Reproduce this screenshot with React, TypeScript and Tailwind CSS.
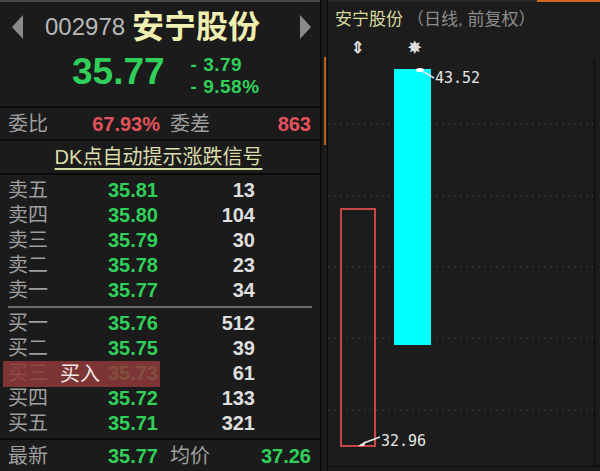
import React from "react"

type Level = { label: string; price: string; vol: string }

const sells: Level[] = [
    { label: "卖五", price: "35.81", vol: "13" },
    { label: "卖四", price: "35.80", vol: "104" },
    { label: "卖三", price: "35.79", vol: "30" },
    { label: "卖二", price: "35.78", vol: "23" },
    { label: "卖一", price: "35.77", vol: "34" },
]

const buys: Level[] = [
    { label: "买一", price: "35.76", vol: "512" },
    { label: "买二", price: "35.75", vol: "39" },
    { label: "买三", price: "35.73", vol: "61" },
    { label: "买四", price: "35.72", vol: "133" },
    { label: "买五", price: "35.71", vol: "321" },
]

// y positions of the dotted price grid inside the chart
const gridLines = [64, 136, 207, 278, 350]

function LevelRow({ level, active }: { level: Level; active?: boolean }) {
    return (
        <div className="relative grid h-[25px] grid-cols-[100px_58px_97px] items-center leading-none">
            <span className="pl-2 text-[20px] text-[#9e9e9e]">{level.label}</span>
            <span className="text-right text-[20px] font-bold text-[#30cf5a]">
                {level.price}
            </span>
            <span className="text-right text-[20px] font-bold text-[#dedede]">
                {level.vol}
            </span>
            {active && (
                // quick-buy overlay sitting on top of the row
                <div className="absolute top-[1px] left-[3px] flex h-[26px] w-[157px] items-center bg-[#8e3838]/85 pl-[57px] text-[20px] text-[#f4e8e8]">
                    买入
                </div>
            )}
        </div>
    )
}

function Arrow({ dir }: { dir: "left" | "right" }) {
    return (
        <svg width="11" height="24" viewBox="0 0 11 24">
            {dir === "left" ? (
                <polygon points="11,0 11,24 0,12" fill="#8a8a8a" />
            ) : (
                <polygon points="0,0 0,24 11,12" fill="#8a8a8a" />
            )}
        </svg>
    )
}

function QuotePanel() {
    return (
        <div className="flex w-[320px] flex-col bg-[#1b1b1b]">
            <div className="h-[2px] bg-[#474747]" />
            {/* code / name */}
            <div className="flex h-[50px] items-center leading-none">
                <div className="pl-[12px]">
                    <Arrow dir="left" />
                </div>
                <span className="ml-[22px] text-[24px] text-[#b9b9b9]">002978</span>
                <span className="ml-[7px] text-[32px] font-bold text-[#efefb0]">
                    安宁股份
                </span>
                <div className="mr-[9px] ml-auto">
                    <Arrow dir="right" />
                </div>
            </div>
            {/* last price and change */}
            <div className="flex h-[54px] items-start pt-[1px] leading-none">
                <span className="pl-[72px] text-[37px] font-bold text-[#30cf5a]">35.77</span>
                <div className="ml-[26px] flex flex-col gap-[3px] pt-[2px] text-[19px] font-bold text-[#30cf5a]">
                    <span className="tracking-[0.5px]">-&nbsp;3.79</span>
                    <span className="tracking-[0.5px]">-&nbsp;9.58%</span>
                </div>
            </div>
            <div className="h-[2px] bg-[#0b0b0b]" />
            <div className="flex h-[31px] items-center text-[20px] leading-none">
                <span className="w-[88px] pl-2 text-[#9e9e9e]">委比</span>
                <span className="w-[72px] text-right font-bold text-[#e2525c]">67.93%</span>
                <span className="pl-[10px] text-[#9e9e9e]">委差</span>
                <span className="flex-1 pr-[9px] text-right font-bold text-[#e2525c]">863</span>
            </div>
            <div className="h-[2px] bg-[#0b0b0b]" />
            <div className="flex h-[32px] items-center justify-center pr-[3px] leading-none">
                <span className="text-[20px] text-[#dcdcab] underline decoration-[1.5px] underline-offset-[4px]">
                    DK点自动提示涨跌信号
                </span>
            </div>
            <div className="h-[2px] bg-[#0b0b0b]" />
            <div className="pt-[2px]">
                {sells.map((l) => (
                    <LevelRow key={l.label} level={l} />
                ))}
            </div>
            <div className="mt-[4px] mr-[8px] ml-[8px] h-[2px] bg-[#6b6b6b]" />
            <div className="pt-[2px]">
                {buys.map((l) => (
                    <LevelRow key={l.label} level={l} active={l.label === "买三"} />
                ))}
            </div>
            <div className="mt-[3px] h-[2px] bg-[#0b0b0b]" />
            <div className="flex flex-1 items-center text-[20px] leading-none">
                <span className="w-[100px] pl-2 text-[#9e9e9e]">最新</span>
                <span className="w-[58px] text-right font-bold text-[#30cf5a]">35.77</span>
                <span className="pl-[12px] text-[#9e9e9e]">均价</span>
                <span className="flex-1 pr-[9px] text-right font-bold text-[#30cf5a]">37.26</span>
            </div>
        </div>
    )
}

function Divider() {
    return (
        <div className="flex w-[8px] flex-col border-r border-l-2 border-[#0b0b0b] bg-[#1b1b1b]">
            <div className="h-[57px]" />
            <div className="ml-[2px] h-[88px] w-[2px] bg-[#b9621f]" />
        </div>
    )
}

function DailyChart() {
    return (
        <svg width="272" height="411" viewBox="0 0 272 411" className="block">
            {gridLines.map((y) => (
                <line
                    key={y}
                    x1="0"
                    x2="266"
                    y1={y}
                    y2={y}
                    stroke="#343434"
                    strokeWidth="1.5"
                    strokeDasharray="2 4"
                />
            ))}
            <line x1="266.5" x2="266.5" y1="0" y2="406" stroke="#0e0e0e" strokeWidth="1.5" />
            <line x1="0" x2="272" y1="406.5" y2="406.5" stroke="#0e0e0e" strokeWidth="1.5" />

            {/* up day: hollow red body */}
            <rect x="13" y="149" width="34" height="237" fill="none" stroke="#c64646" strokeWidth="2" />
            {/* limit-down day: solid cyan body */}
            <rect x="66" y="9" width="37" height="276" fill="#00ffff" />

            {/* high marker */}
            <ellipse cx="92" cy="10" rx="4" ry="2" fill="#ffffff" />
            <path d="M94 11 L106 18" stroke="#e6e6e6" strokeWidth="1.5" fill="none" />
            <text x="107" y="23" fill="#e6e6e6" fontSize="15" fontFamily="DejaVu Sans Mono, monospace">
                43.52
            </text>

            {/* low marker */}
            <path d="M30 386 L38 381 L36 386 Z" fill="#ffffff" />
            <path d="M36 383 L52 377" stroke="#e6e6e6" strokeWidth="1.5" fill="none" />
            <text x="53" y="386" fill="#e6e6e6" fontSize="15" fontFamily="DejaVu Sans Mono, monospace">
                32.96
            </text>
        </svg>
    )
}

function ChartPanel() {
    return (
        <div className="flex flex-1 flex-col bg-[#1c1c1c]">
            <div className="flex h-[2px]">
                <div className="w-[209px] bg-[#262626]" />
                <div className="flex-1 bg-[#cf6a22]" />
            </div>
            <div className="flex h-[34px] items-center pl-[7px] text-[17px] leading-none">
                <span className="text-[#dada9c]">安宁股份</span>
                <span className="pl-[4px] text-[#8c8c8c]">（日线, 前复权）</span>
            </div>
            <div className="flex h-[24px] items-center text-[16px] leading-none font-bold text-[#dcdcdc]">
                <span className="pl-[23px]">⇕</span>
                <span className="pl-[44px]">✸</span>
            </div>
            <DailyChart />
        </div>
    )
}

export default function App() {
    return (
        <div className="flex h-[471px] w-[600px] overflow-hidden bg-[#1b1b1b] font-['Liberation_Sans','Noto_Sans_CJK_SC',sans-serif]">
            <QuotePanel />
            <Divider />
            <ChartPanel />
        </div>
    )
}
